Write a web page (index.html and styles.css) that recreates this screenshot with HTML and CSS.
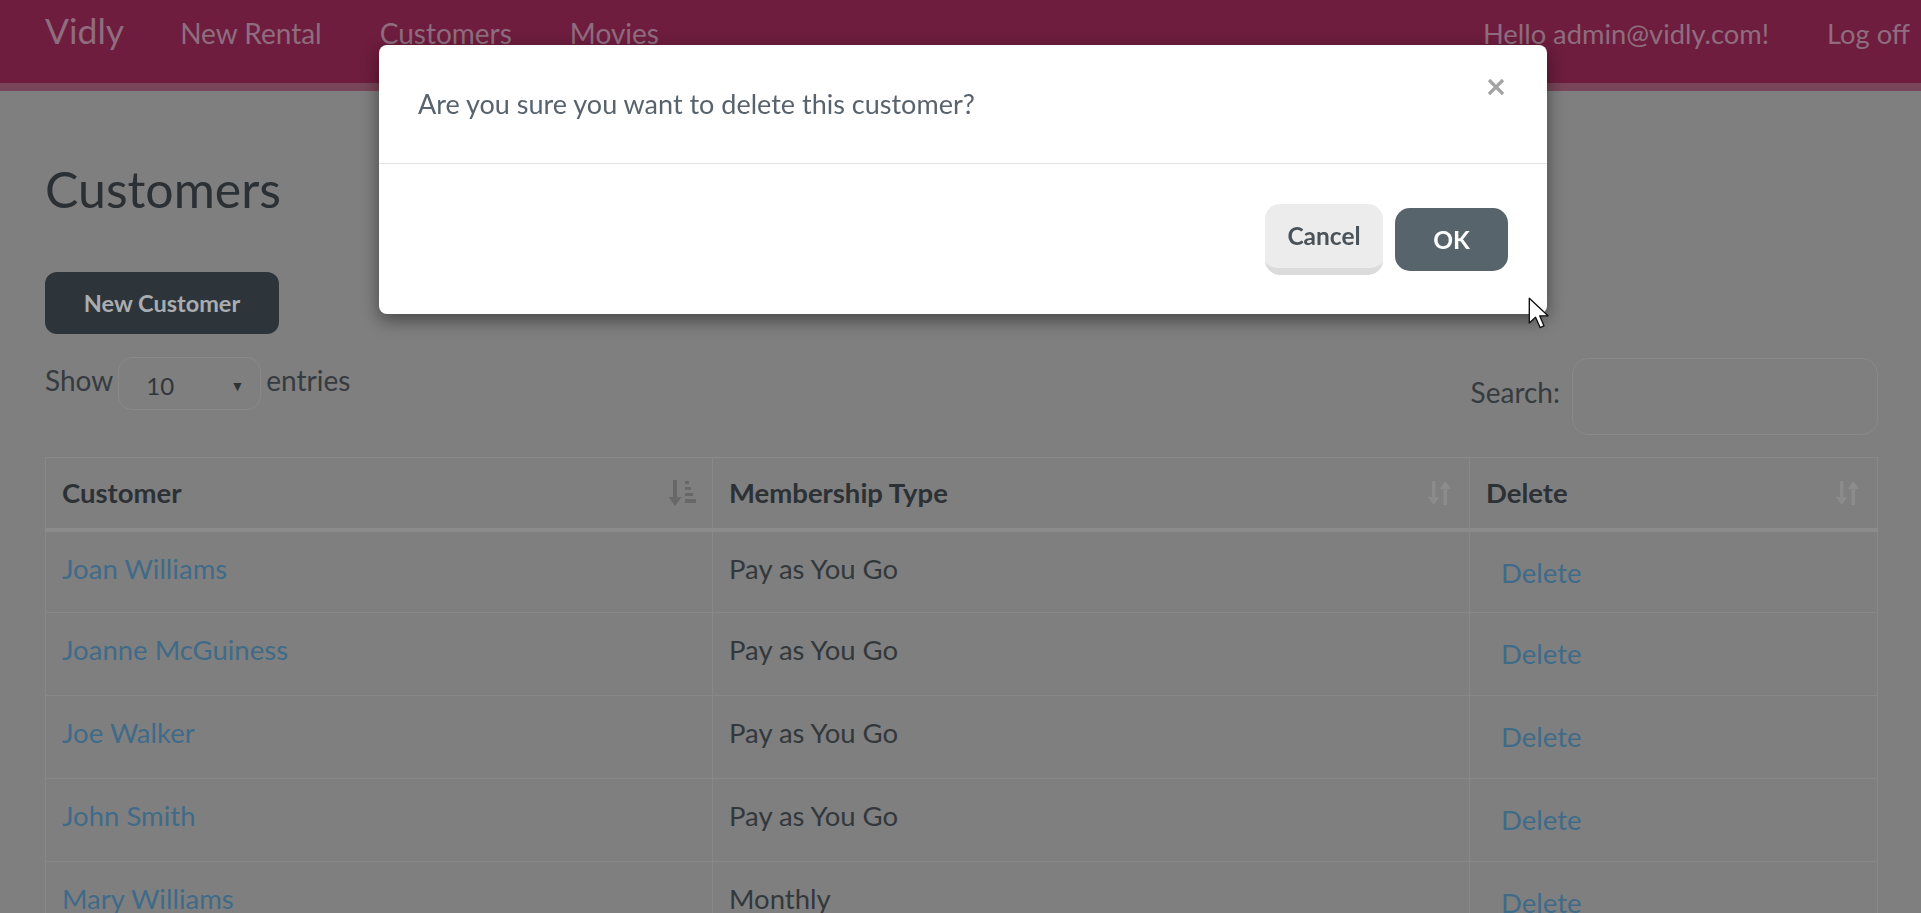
FILE: index.html
```html
<!DOCTYPE html>
<html lang="en">
<head>
<meta charset="utf-8">
<title>Customers - Vidly</title>
<link rel="stylesheet" href="styles.css">
</head>
<body>
<header class="navbar">
  <a class="brand" href="#">Vidly</a>
  <nav class="nav nav-left">
    <a href="#">New Rental</a>
    <a href="#">Customers</a>
    <a href="#">Movies</a>
  </nav>
  <nav class="nav nav-right">
    <a href="#">Hello admin@vidly.com!</a>
    <a href="#">Log off</a>
  </nav>
</header>

<main class="container">
  <h2 class="page-title">Customers</h2>
  <a class="btn-new" href="#">New Customer</a>

  <div class="dt-controls">
    <div class="dt-length">
      <span class="lbl">Show</span>
      <span class="select"><span>10</span><span class="caret">&#9660;</span></span>
      <span class="lbl">entries</span>
    </div>
    <div class="dt-search">
      <span class="lbl">Search:</span>
      <span class="search-input"></span>
    </div>
  </div>

  <table class="grid">
    <colgroup>
      <col class="c1"><col class="c2"><col class="c3">
    </colgroup>
    <thead>
      <tr>
        <th><div class="th-in"><span>Customer</span>
          <svg class="sort sort-active" viewBox="0 0 28 26" width="28" height="26">
            <path d="M5 0h4v17h4.5L7 26 0.5 17H5z"/>
            <rect x="17" y="1" width="4" height="3"/>
            <rect x="17" y="7" width="6" height="3"/>
            <rect x="17" y="13" width="8" height="3"/>
            <rect x="17" y="19" width="11" height="4"/>
          </svg></div></th>
        <th><div class="th-in"><span>Membership Type</span>
          <svg class="sort" viewBox="0 0 26 26" width="26" height="26">
            <path d="M5 1h3.5v16h4L6.7 25 1 17h4z"/>
            <path d="M16.5 25h3.5V9h4L18.3 1 12.5 9h4z"/>
          </svg></div></th>
        <th><div class="th-in"><span>Delete</span>
          <svg class="sort" viewBox="0 0 26 26" width="26" height="26">
            <path d="M5 1h3.5v16h4L6.7 25 1 17h4z"/>
            <path d="M16.5 25h3.5V9h4L18.3 1 12.5 9h4z"/>
          </svg></div></th>
      </tr>
    </thead>
    <tbody>
      <tr><td><a href="#">Joan Williams</a></td><td>Pay as You Go</td><td><a class="btn-link" href="#">Delete</a></td></tr>
      <tr><td><a href="#">Joanne McGuiness</a></td><td>Pay as You Go</td><td><a class="btn-link" href="#">Delete</a></td></tr>
      <tr><td><a href="#">Joe Walker</a></td><td>Pay as You Go</td><td><a class="btn-link" href="#">Delete</a></td></tr>
      <tr><td><a href="#">John Smith</a></td><td>Pay as You Go</td><td><a class="btn-link" href="#">Delete</a></td></tr>
      <tr><td><a href="#">Mary Williams</a></td><td>Monthly</td><td><a class="btn-link" href="#">Delete</a></td></tr>
    </tbody>
  </table>
</main>

<div class="modal-layer">
  <div class="modal">
    <div class="modal-header">
      <h4 class="modal-title">Are you sure you want to delete this customer?</h4>
      <button class="close" type="button" aria-label="Close">
        <svg viewBox="0 0 18 18" width="18" height="18"><path d="M2 2L16 16M16 2L2 16"/></svg>
      </button>
    </div>
    <div class="modal-footer">
      <button class="btn btn-cancel" type="button">Cancel</button>
      <button class="btn btn-ok" type="button">OK</button>
    </div>
  </div>
</div>

<svg class="cursor" viewBox="0 0 20 30" width="23" height="34">
  <path d="M1 1V23L6.5 17.8L10.5 27L14 25.5L10.2 16.6H17.5Z"/>
</svg>
</body>
</html>
```

FILE: styles.css
```css
* { box-sizing: border-box; }

html, body {
  margin: 0;
  padding: 0;
  height: 100%;
  overflow: hidden;
}

body {
  background: #7f7f7f;
  font-family: Lato, "Open Sans", sans-serif;
  color: #2d3237;
}

a { text-decoration: none; }

/* ---------- Navbar ---------- */
.navbar {
  display: flex;
  align-items: baseline;
  height: 91px;
  padding: 9px 11px 0 45px;
  background: #6e1d3e;
  border-bottom: 8px solid #784658;
}

.brand {
  font-size: 35.5px;
  color: #8f6d7f;
  margin-right: 27px;
}

.nav { display: flex; align-items: baseline; }
.nav a {
  font-size: 28px;
  color: #8f6d7f;
  padding: 0 29px;
}
.nav-right { margin-left: auto; }
.nav-right a { font-size: 27.3px; }
.nav-right a:last-child { padding-right: 0; }

/* ---------- Content ---------- */
.container {
  padding: 0 43px 0 45px;
}

.page-title {
  margin: 68px 0 0;
  font-size: 50px;
  line-height: 60px;
  font-weight: 400;
  color: #2b3035;
}

.btn-new {
  display: inline-flex;
  align-items: center;
  justify-content: center;
  margin-top: 53px;
  width: 234px;
  height: 62px;
  border-radius: 12px;
  background: #2d353b;
  color: #a9adb0;
  font-weight: 700;
  font-size: 23.5px;
}

.dt-controls {
  display: flex;
  justify-content: space-between;
  align-items: flex-start;
  margin-top: 23px;
  font-size: 28px;
  color: #363b40;
}

.dt-length {
  display: flex;
  align-items: center;
  gap: 5px;
  height: 53px;
}
.dt-length .lbl { padding-bottom: 8px; }

.select {
  display: flex;
  align-items: center;
  justify-content: space-between;
  width: 143px;
  height: 53px;
  padding: 4px 16px 0 27px;
  border: 1px solid #898989;
  border-radius: 14px;
  font-size: 24px;
  color: #30353a;
}
.caret { font-size: 14px; color: #2e3237; }

.dt-search {
  display: flex;
  align-items: center;
  gap: 12px;
  margin-top: 1px;
}
.dt-search .lbl { padding-bottom: 10px; }
.search-input {
  display: block;
  width: 306px;
  height: 77px;
  border: 1px solid #898989;
  border-radius: 16px;
}

/* ---------- Table ---------- */
.grid {
  width: 100%;
  margin-top: 22px;
  border-collapse: collapse;
  border: 1px solid #888888;
  font-size: 27.5px;
}
.c1 { width: 667px; }
.c2 { width: 757px; }

.grid th, .grid td {
  border: 1px solid #888888;
  text-align: left;
}

.grid th {
  height: 72px;
  padding: 0 16px;
  border-bottom: 4px solid #8b8b8b;
  font-weight: 700;
  color: #2c3136;
}

.th-in {
  display: flex;
  align-items: center;
  justify-content: space-between;
}

.sort { fill: #8b8b8b; margin-top: 1px; }
.sort-active { fill: #686868; }

.grid td {
  height: 83px;
  padding: 20px 16px 0;
  vertical-align: top;
  line-height: 34px;
  color: #33383c;
}
.grid td a { color: #3f6b89; }
.grid td .btn-link {
  display: inline-block;
  padding: 4px 15px 0;
}

/* ---------- Modal ---------- */
.modal-layer {
  position: fixed;
  inset: 0;
  display: flex;
  justify-content: center;
  align-items: flex-start;
  padding: 45px 0 0 5px;
}

.modal {
  width: 1168px;
  background: #ffffff;
  border-radius: 8px;
  box-shadow: 0 6px 18px rgba(0, 0, 0, 0.45);
}

.modal-header {
  position: relative;
  height: 119px;
  padding: 41px 32px 0 39px;
  border-bottom: 1px solid #e4e4e4;
}

.modal-title {
  margin: 0;
  font-size: 27px;
  line-height: 35px;
  font-weight: 400;
  color: #58636d;
}

.close {
  position: absolute;
  top: 33px;
  right: 42px;
  padding: 0;
  border: 0;
  background: none;
  width: 18px;
  height: 18px;
}
.close svg { display: block; stroke: #a3a3a3; stroke-width: 3.2; }

.modal-footer {
  display: flex;
  justify-content: flex-end;
  align-items: center;
  gap: 12px;
  height: 150px;
  padding-right: 39px;
}

.btn {
  font-family: Lato, "Open Sans", sans-serif;
  font-weight: 700;
  font-size: 24.5px;
  border: 0;
  border-radius: 15px;
  padding: 0;
}

.btn-cancel {
  width: 118px;
  height: 71px;
  background: #ececec;
  border-bottom: 7px solid #dbdbdb;
  color: #4b535a;
}

.btn-ok {
  width: 113px;
  height: 63px;
  background: #58646b;
  color: #ffffff;
}

/* ---------- Mouse pointer ---------- */
.cursor {
  position: fixed;
  left: 1528px;
  top: 297px;
  fill: #ffffff;
  stroke: #111111;
  stroke-width: 1.2;
  stroke-linejoin: round;
}
```
